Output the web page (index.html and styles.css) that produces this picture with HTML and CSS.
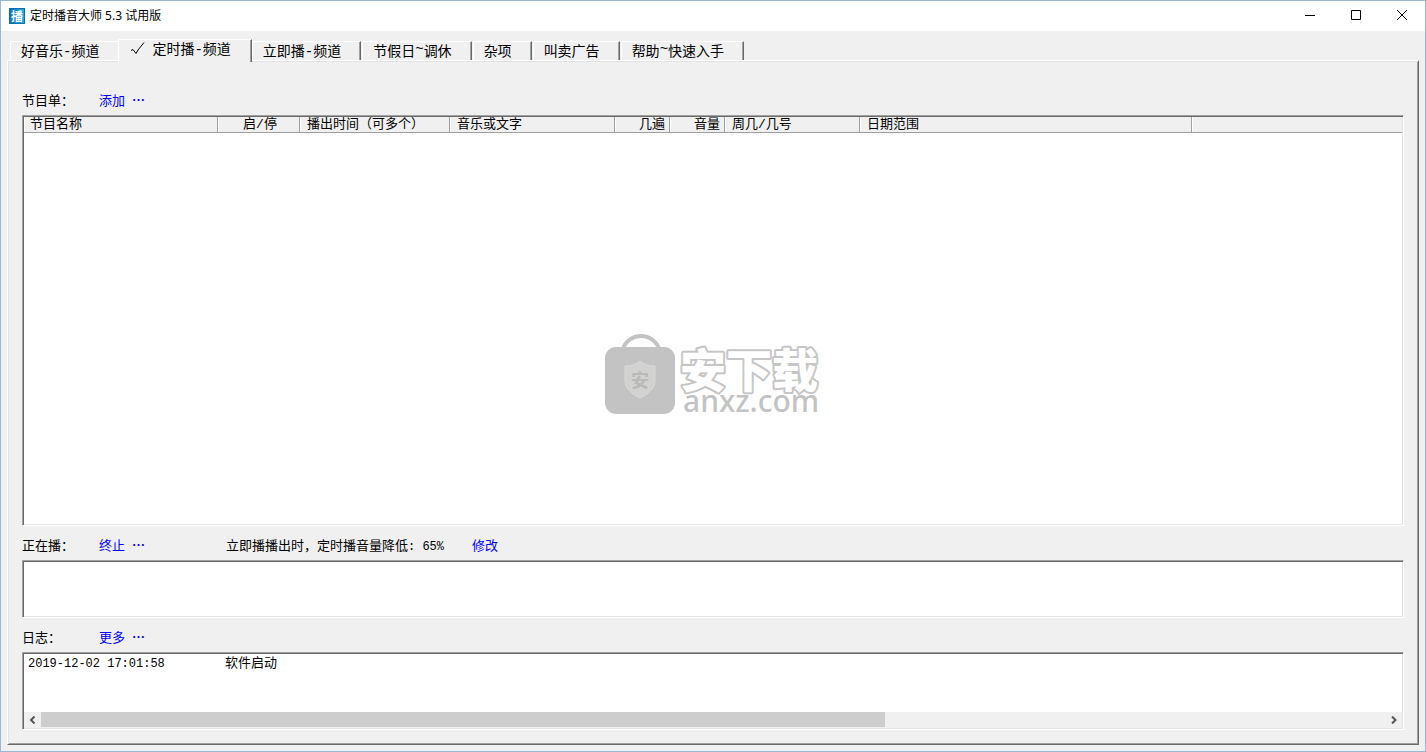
FILE: index.html
```html
<!DOCTYPE html>
<html lang="zh-CN">
<head>
<meta charset="utf-8">
<title>定时播音大师 5.3 试用版</title>
<link rel="stylesheet" href="styles.css">
</head>
<body>
<div class="window">
  <header class="titlebar">
    <span class="app-icon" aria-hidden="true">播</span>
    <h1 class="title">定时播音大师 5.3 试用版</h1>
    <div class="window-buttons">
      <button class="window-button" type="button" aria-label="最小化"><svg width="12" height="12" viewBox="0 0 12 12"><path d="M1 5.5H11"/></svg></button>
      <button class="window-button" type="button" aria-label="最大化"><svg width="12" height="12" viewBox="0 0 12 12"><path d="M1.5 0.5H10.5V9.500H1.5Z"/></svg></button>
      <button class="window-button" type="button" aria-label="关闭"><svg width="12" height="12" viewBox="0 0 12 12"><path d="M1 0L11 10M11 0L1 10"/></svg></button>
    </div>
  </header>
  <main class="content">
    <div class="tabs" role="tablist">
      <button class="tab" type="button" role="tab">好音乐-频道</button>
      <button class="tab tab-selected" type="button" role="tab" aria-selected="true"><svg class="check" width="15" height="14" viewBox="0 0 15 14" aria-hidden="true"><path d="M1 8.500L3 7.500L6 11.500M6 11.500L8 8L14 0.500"/></svg>定时播-频道</button>
      <button class="tab" type="button" role="tab">立即播-频道</button>
      <button class="tab" type="button" role="tab">节假日<span class="tilde">~</span>调休</button>
      <button class="tab" type="button" role="tab">杂项</button>
      <button class="tab" type="button" role="tab">叫卖广告</button>
      <button class="tab" type="button" role="tab">帮助<span class="tilde">~</span>快速入手</button>
    </div>
    <section class="panel" role="tabpanel">
      <div class="caption">
        <span>节目单：</span>
        <a class="link" href="#add">添加<span class="dots">…</span></a>
      </div>
      <div class="box program-box">
        <table class="programs">
          <colgroup>
            <col class="col-name"><col class="col-state"><col class="col-time"><col class="col-music"><col class="col-count"><col class="col-count"><col class="col-week"><col class="col-range"><col>
          </colgroup>
          <thead>
            <tr>
              <th>节目名称</th>
              <th class="center">启/停</th>
              <th>播出时间（可多个）</th>
              <th>音乐或文字</th>
              <th class="right">几遍</th>
              <th class="right">音量</th>
              <th>周几/几号</th>
              <th>日期范围</th>
              <th></th>
            </tr>
          </thead>
        </table>
        <svg class="watermark" width="216" height="92" viewBox="0 0 216 92" role="img" aria-label="安下载 anxz.com">
          <path class="handle" d="M18 19C24 -1 50 -1 56 19"/>
          <rect class="bag" x="1" y="15" width="70" height="67" rx="11"/>
          <path class="shield" d="M36 29C41 33 46 34 51 34V49C51 57 44 62 36 66C28 62 21 57 21 49V34C26 34 31 33 36 29Z"/>
          <text class="shield-text" x="27" y="55">安</text>
          <text class="mark-name" x="76" y="55">安下载</text>
          <text class="mark-site" x="79" y="80">anxz.com</text>
        </svg>
      </div>
      <div class="caption">
        <span>正在播：</span>
        <a class="link" href="#stop">终止<span class="dots">…</span></a>
        <span>立即播播出时，定时播音量降低<span class="latin">: 65%</span></span>
        <a class="link" href="#edit">修改</a>
      </div>
      <div class="box playing-box"></div>
      <div class="caption">
        <span>日志：</span>
        <a class="link" href="#more">更多<span class="dots">…</span></a>
      </div>
      <div class="box log-box">
        <div class="log-row"><time class="latin">2019-12-02 17:01:58</time><span>软件启动</span></div>
        <div class="scrollbar">
          <button class="scroll-button" type="button" aria-label="向左滚动"><svg width="8" height="8" viewBox="0 0 8 8"><path d="M5.500 0.500L2 4L5.500 7.500"/></svg></button>
          <div class="track"><div class="thumb"></div></div>
          <button class="scroll-button" type="button" aria-label="向右滚动"><svg width="8" height="8" viewBox="0 0 8 8"><path d="M2 0.500L5.500 4L2 7.500"/></svg></button>
        </div>
      </div>
    </section>
  </main>
</div>
</body>
</html>
```

FILE: styles.css
```css
* {
  box-sizing: border-box;
}

body {
  margin: 0;
  color: #000;
  font: 13px/18px "Liberation Mono", "Noto Sans CJK SC", monospace;
}

button {
  border: 0;
  padding: 0;
  background: none;
  color: inherit;
  font: inherit;
}

.window {
  display: flex;
  flex-direction: column;
  min-height: 100vh;
  border: 1px solid #99b8d5;
  background: #f0f0f0;
}

.titlebar {
  display: flex;
  align-items: center;
  height: 30px;
  padding-left: 8px;
  background: #fff;
}

.app-icon {
  width: 16px;
  height: 16px;
  border: 1px solid #0a6ea8;
  background: linear-gradient(90deg, #1173c0, #12b0e6);
  color: #fff;
  font: 700 12px/13px "Noto Sans CJK SC", sans-serif;
  text-align: center;
}

.title {
  flex: 1;
  margin: 0 0 0 5px;
  font: 400 12px/18px "Noto Sans", "Noto Sans CJK SC", sans-serif;
}

.window-buttons {
  display: flex;
}

.window-button {
  display: flex;
  align-items: center;
  justify-content: center;
  width: 46px;
  height: 30px;
}

.window-button path {
  fill: none;
  stroke: #000;
}

.content {
  display: flex;
  flex: 1;
  flex-direction: column;
  padding: 0 6px 6px;
}

.tabs {
  display: flex;
  align-items: flex-end;
  gap: 1px;
  padding: 8px 3px 0;
}

.tab {
  height: 19px;
  padding: 0 19px 0 10px;
  border: solid;
  border-width: 1px 1px 0;
  border-color: #fff #696969 #fff #fff;
  border-top-left-radius: 2px;
  box-shadow: inset -1px 0 #a0a0a0;
  font-size: 14px;
  line-height: 20px;
  white-space: nowrap;
}

.tab:first-child {
  border-right-color: transparent;
  box-shadow: none;
}

.tab-selected {
  z-index: 1;
  display: flex;
  align-items: flex-start;
  gap: 7px;
  height: 23px;
  margin: 0 -1px -2px -2px;
  padding: 0 20px 0 11px;
  background: #f0f0f0;
}

.check {
  margin-top: 2px;
  fill: none;
  stroke: #000;
}

.tilde {
  vertical-align: 3px;
  line-height: 0;
}

.panel {
  display: flex;
  flex: 1;
  flex-direction: column;
  padding: 30px 14px 14px;
  border: 1px solid;
  border-color: #fff #696969 #696969 #fff;
  box-shadow: inset 1px 1px #e3e3e3, inset -1px -1px #a0a0a0;
}

.caption {
  display: grid;
  grid-template-columns: 77px 127px auto auto;
  justify-content: start;
  height: 18px;
  margin-bottom: 6px;
}

.caption .link:last-child:nth-child(4) {
  margin-left: 28px;
}

.caption,
.link {
  font-family: "Noto Sans CJK SC", sans-serif;
}

.link {
  display: flex;
  gap: 7px;
  color: #0000ff;
  text-decoration: none;
}

.dots {
  font-weight: 700;
}

.latin {
  font-family: "Liberation Mono", monospace;
  font-size: 12px;
}

.caption .latin {
  line-height: 0;
}

.box {
  border: 1px solid;
  border-color: #a0a0a0 #fff #fff #a0a0a0;
  background: #fff;
  box-shadow: inset 1px 1px #696969, inset -1px -1px #e3e3e3;
}

.box + .caption {
  margin-top: 10px;
}

.program-box {
  position: relative;
  flex: 1;
  padding: 1px;
}

.programs {
  width: 100%;
  table-layout: fixed;
  border-collapse: separate;
  border-spacing: 0;
}

.programs th {
  height: 16px;
  padding: 1px 4px 0 7px;
  border-right: 1px solid #a0a0a0;
  border-bottom: 1px solid #a0a0a0;
  background: #f0f0f0;
  box-shadow: inset 1px 0 #fff;
  font-weight: 400;
  line-height: 14px;
  text-align: left;
  white-space: nowrap;
}

.programs th:first-child {
  padding-left: 6px;
}

.programs th:last-child {
  border-right: 0;
}

.programs .center {
  text-align: center;
}

.programs .right {
  text-align: right;
}

.col-name { width: 194px; }
.col-state { width: 82px; }
.col-time { width: 150px; }
.col-music { width: 165px; }
.col-count { width: 55px; }
.col-week { width: 135px; }
.col-range { width: 332px; }

.watermark {
  position: absolute;
  top: 216px;
  left: calc(50% - 109px);
}

.handle {
  fill: none;
  stroke: #c3c3c3;
  stroke-width: 4;
}

.bag {
  fill: #c3c3c3;
}

.shield {
  fill: #d2d2d0;
  stroke: #dadada;
}

.shield-text {
  fill: #b9b9b9;
  font: 700 18px "Noto Sans CJK SC", sans-serif;
}

.mark-name {
  fill: #fff;
  stroke: #c6c6c6;
  stroke-width: 4;
  stroke-linejoin: round;
  paint-order: stroke;
  font: 900 46px "Noto Sans CJK SC", sans-serif;
}

.mark-site {
  fill: #c3c3c3;
  font: 500 30px "Noto Sans", sans-serif;
}

.playing-box {
  height: 58px;
}

.log-box {
  display: flex;
  flex-direction: column;
  justify-content: space-between;
  height: 78px;
  padding: 1px;
}

.log-row {
  display: grid;
  grid-template-columns: 197px auto;
  align-items: baseline;
  justify-content: start;
  padding-left: 4px;
  font-family: "Noto Sans CJK SC", sans-serif;
  line-height: 16px;
}

.scrollbar {
  display: flex;
  height: 16px;
  background: #f0f0f0;
}

.scroll-button {
  display: flex;
  align-items: center;
  justify-content: center;
  width: 17px;
}

.scroll-button path {
  fill: none;
  stroke: #555;
  stroke-width: 2;
}

.track {
  flex: 1;
}

.thumb {
  width: 62.8%;
  height: 15px;
  background: #cdcdcd;
}
```
